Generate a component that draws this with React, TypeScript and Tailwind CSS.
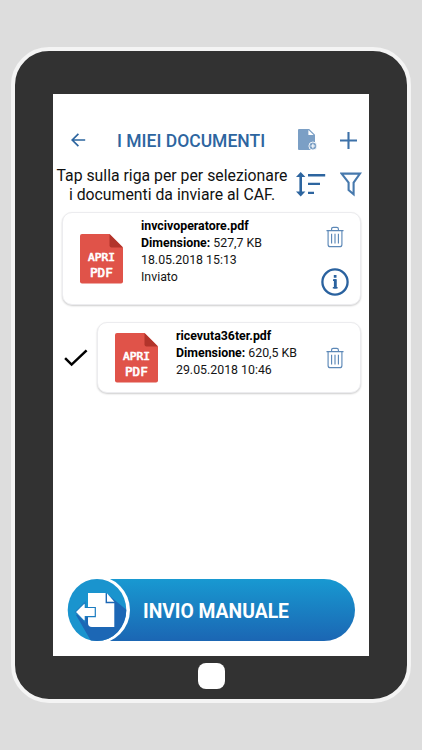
interface Doc { name: string; size: string; date: string; sent: boolean; selected: boolean; }

const docs: Doc[] = [
  { name: 'invcivoperatore.pdf', size: '527,7 KB', date: '18.05.2018 15:13', sent: true, selected: false },
  { name: 'ricevuta36ter.pdf', size: '620,5 KB', date: '29.05.2018 10:46', sent: false, selected: true },
];

function BackIcon() {
  return (
    <svg width="15" height="14" viewBox="0 0 15 14" fill="none" stroke="#2d659f" strokeWidth="1.7">
      <path d="M14.2 7H1.5M7.4 .8 1.2 7l6.2 6.2" />
    </svg>
  );
}

function AddFileIcon() {
  return (
    <svg width="20" height="22" viewBox="0 0 20 22">
      <path d="M1 0h10.2L17 5.8V20a1 1 0 0 1-1 1H1a1 1 0 0 1-1-1V1a1 1 0 0 1 1-1Z" fill="#7b9fc5" />
      <path d="M10.4 .9v5.2h5.2Z" fill="#fff" />
      <circle cx="14.9" cy="17" r="4" fill="#7b9fc5" stroke="#fff" strokeWidth=".9" />
      <path d="M14.9 14.7v4.6M12.6 17h4.6" stroke="#fff" strokeWidth="1.2" />
    </svg>
  );
}

function PlusIcon() {
  return (
    <svg width="17" height="17" viewBox="0 0 17 17" stroke="#3d71a8" strokeWidth="2.1">
      <path d="M8.5 0v17M0 8.5h17" />
    </svg>
  );
}

function SortIcon() {
  return (
    <svg width="30" height="25" viewBox="0 0 30 25" fill="#2d659f">
      <path d="M4.7 0 9.4 5H6v14.6h3.4L4.7 24.6 0 19.6h3.4V5H0Z" />
      <path d="M12 2.1h17.2v2.3H12ZM12 10.8h12v2.3H12ZM12 19.7h6V22h-6Z" />
    </svg>
  );
}

function FilterIcon() {
  return (
    <svg width="22" height="25" viewBox="0 0 22 25" fill="none" stroke="#4779ad" strokeWidth="2.1">
      <path d="M1.6 1.6h18.4l-6.4 9.1V22.3l-5-4.2v-7.4Z" />
    </svg>
  );
}

function TrashIcon() {
  return (
    <svg width="18" height="22" viewBox="0 0 19 22" fill="none" stroke="#5c88b7" strokeWidth="1.2">
      <path d="M.5 4.2h18M2.2 4.4v14.4q0 2.4 2.4 2.4h9.8q2.4 0 2.4-2.4V4.4M5.9 4V2.6q0-1.8 1.8-1.8h3.6q1.8 0 1.8 1.8V4" />
      <path d="M5.9 7.6v10.2M9.5 7.6v10.2M13.1 7.6v10.2" />
    </svg>
  );
}

function InfoIcon() {
  return (
    <svg width="28" height="28" viewBox="0 0 28 28" fill="none" stroke="#2a629f" strokeWidth="2.3">
      <circle cx="14" cy="14" r="12.6" />
      <path d="M12 12.1h2.6v7.4M11.8 19.7h4.8" strokeWidth="1.6" />
      <path d="M12.8 7.1h2.7v2.7h-2.7ZM12.900 11.300h2.700v9.100h-2.700Z" fill="#2a629f" stroke="none" />
    </svg>
  );
}

function CheckIcon() {
  return (
    <svg width="24" height="18" viewBox="0 0 24 18" fill="none" stroke="#000" strokeWidth="2.5">
      <path d="M1.1 9.2 7.6 15.6 22.6 1.3" />
    </svg>
  );
}

function PdfIcon() {
  return (
    <svg className="shrink-0" width="43" height="50" viewBox="0 0 43 50">
      <path d="M2 0h27.5L43 13.5v34a2 2 0 0 1-2 2H2a2 2 0 0 1-2-2V2a2 2 0 0 1 2-2Z" fill="#e05349" />
      <path d="M29.5 0 43 13.5H31.5a2 2 0 0 1-2-2Z" fill="#b2342b" />
      <g fill="#fff" stroke="#fff" strokeWidth=".7" strokeLinejoin="round" fontWeight="400" fontFamily="'DejaVu Sans Mono', monospace">
        <text x="8" y="27.2" fontSize="11.2">APRI</text>
        <text x="10" y="42.7" fontSize="12.6">PDF</text>
      </g>
    </svg>
  );
}

function SendIcon() {
  return (
    <svg className="overflow-visible" width="62" height="62" viewBox="0 0 62 62">
      <defs>
        <clipPath id="disc"><ellipse cx="30" cy="31" rx="29.3" ry="31" /></clipPath>
      </defs>
      <circle cx="29" cy="31" r="34" fill="#fff" />
      <g clipPath="url(#disc)">
        <path d="M0 0h62v62H0Z" fill="#1a94ce" />
        <path d="M39 14 62 33v29H24L9 36l16-10Z" fill="#1c67b5" />
      </g>
      <path d="M21 14h17.6v10.3h8.7V48H25q-4 0-4-4Z" fill="#fff" />
      <path d="M40 14.3v8.5h7.3Z" fill="#fff" />
      <path d="M8.5 33 18 23.5v5h10.3v9.2H18V43Z" fill="#fff" stroke="#1b7cc0" strokeWidth="1.2" />
      <path d="M9.2 33 17.5 24.7v16.8Z" fill="#fff" />
    </svg>
  );
}

function DocRow({ doc }: { doc: Doc }) {
  return (
    <div className="flex items-center">
      {doc.selected && <div className="w-[35px] shrink-0 pl-0.5"><CheckIcon /></div>}
      <div className={`flex flex-1 rounded-[10px] border border-[#ececef] bg-white pl-[17px] shadow-[0_1px_2px_rgba(0,0,0,0.2)] ${doc.sent ? 'h-[93px]' : 'h-[71px]'}`}>
        <div className={doc.sent ? 'pt-[21px]' : 'pt-2.5'}><PdfIcon /></div>
        <div className="flex-1 pt-[5px] pl-[18px] text-[12.35px] leading-[17px] whitespace-nowrap text-[#151515]">
          <p className="font-bold text-black">{doc.name}</p>
          <p><b className="text-black">Dimensione:</b> {doc.size}</p>
          <p>{doc.date}</p>
          {doc.sent && <p>Inviato</p>}
        </div>
        <div className={`mr-[11px] flex w-7 flex-col items-center ${doc.sent ? 'gap-5 pt-[13px]' : 'pt-6'}`}>
          <TrashIcon />
          {doc.sent && <InfoIcon />}
        </div>
      </div>
    </div>
  );
}

export default function App() {
  return (
    <div className="h-[750px] w-[422px] overflow-hidden bg-[#dddddd] pt-[47px] pl-[11px] font-['Roboto',sans-serif]">
      <div className="flex h-[656px] w-[400px] flex-col items-center rounded-[38px] border-4 border-[#f4f4f4] bg-[#323232] pt-[43px]">
        <main className="flex h-[562px] w-[316px] shrink-0 flex-col bg-white">
          <header className="mt-[34px] flex h-6 items-center pl-[18px]">
            <BackIcon />
            <h1 className="ml-[30px] w-[182px] pt-[3px] pl-px text-[17.5px] font-medium whitespace-nowrap text-[#2d659f]">I MIEI DOCUMENTI</h1>
            <AddFileIcon />
            <div className="ml-[22px]"><PlusIcon /></div>
          </header>
          <div className="mt-[15px] flex h-[37px] pl-[3px]">
            <p className="w-[232px] text-center text-[15.8px] leading-[18.5px] whitespace-nowrap text-[#111]">
              Tap sulla riga per per selezionare<br />i documenti da inviare al CAF.
            </p>
            <div className="mt-[5px] ml-2 flex gap-[14px]">
              <SortIcon />
              <FilterIcon />
            </div>
          </div>
          <section className="mt-2 flex flex-col gap-[17px] pr-2 pl-[9px]">
            {docs.map(d => <DocRow key={d.name} doc={d} />)}
          </section>
          <button className="mt-auto mb-[15px] ml-[14px] flex h-[62px] w-[288px] items-center rounded-full bg-gradient-to-b from-[#1899d1] to-[#1b66b3] text-left">
            <SendIcon />
            <span className="ml-[14px] pt-1 text-[19.3px] font-bold whitespace-nowrap text-white">INVIO MANUALE</span>
          </button>
        </main>
        <div className="mt-[7px] h-[26px] w-[27px] rounded-[8px] bg-white" />
      </div>
    </div>
  );
}
